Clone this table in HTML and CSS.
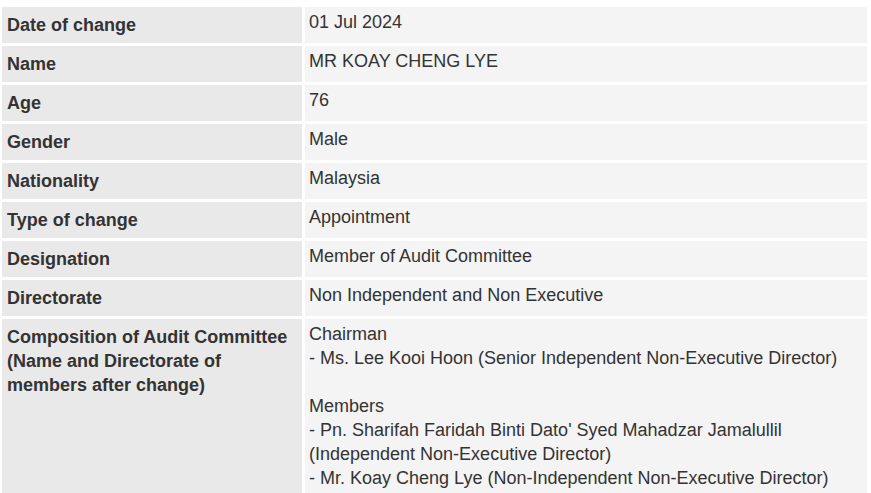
FILE: index.html
```html
<!DOCTYPE html>
<html lang="en">
<head>
    <meta charset="UTF-8">
    <meta name="viewport" content="width=device-width, initial-scale=1.0">
    <title>Change in Audit Committee</title>
    <link rel="stylesheet" href="styles.css">
</head>
<body>
    <table class="details">
        <tr>
            <th>Date of change</th>
            <td>01 Jul 2024</td>
        </tr>
        <tr>
            <th>Name</th>
            <td>MR KOAY CHENG LYE</td>
        </tr>
        <tr>
            <th>Age</th>
            <td>76</td>
        </tr>
        <tr>
            <th>Gender</th>
            <td>Male</td>
        </tr>
        <tr>
            <th>Nationality</th>
            <td>Malaysia</td>
        </tr>
        <tr>
            <th>Type of change</th>
            <td>Appointment</td>
        </tr>
        <tr>
            <th>Designation</th>
            <td>Member of Audit Committee</td>
        </tr>
        <tr>
            <th>Directorate</th>
            <td>Non Independent and Non Executive</td>
        </tr>
        <tr class="long">
            <th>Composition of Audit Committee (Name and Directorate of members after change)</th>
            <td>Chairman<br>
                - Ms. Lee Kooi Hoon (Senior Independent Non-Executive Director)<br>
                <br>
                Members<br>
                - Pn. Sharifah Faridah Binti Dato' Syed Mahadzar Jamalullil (Independent Non-Executive Director)<br>
                - Mr. Koay Cheng Lye (Non-Independent Non-Executive Director)
            </td>
        </tr>
    </table>
</body>
</html>
```

FILE: styles.css
```css
body {
    margin: 0;
    background: #fff;
    font-family: 'Liberation Sans', Arial, sans-serif;
    font-size: 18px;
    line-height: 24px;
    color: #333;
}

.details {
    width: 871px;
    margin: 4px 0 0 -1px;
    border-collapse: separate;
    border-spacing: 3px;
}

.details tr {
    height: 36px;
}

.details th {
    width: 289px;
    padding: 1px 6px 1px 5px;
    background: #e9e9e9;
    font-weight: bold;
    text-align: left;
    vertical-align: middle;
}

.details td {
    padding: 3px 4px 3px 4px;
    background: #f4f4f4;
    vertical-align: top;
}

.details tr.long th {
    padding-top: 6px;
    vertical-align: top;
}
```
